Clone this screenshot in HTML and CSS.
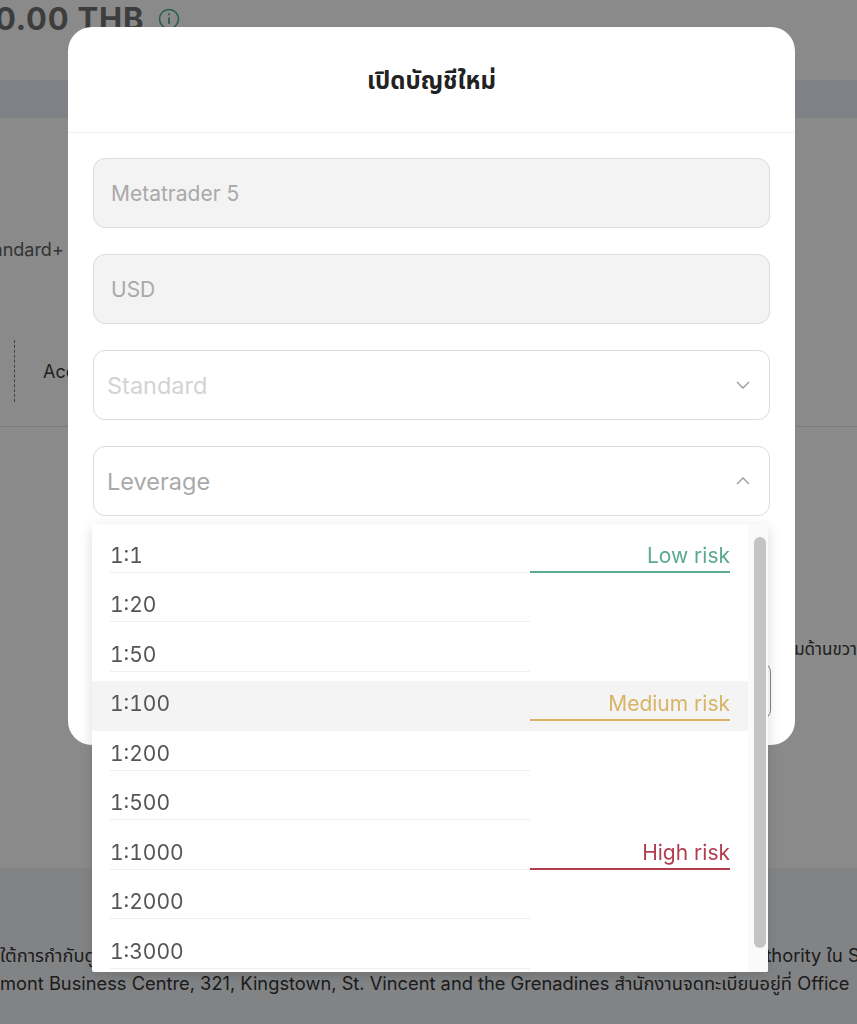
FILE: index.html
```html
<!DOCTYPE html>
<html lang="th">
<head>
<meta charset="utf-8">
<title>เปิดบัญชีใหม่</title>
<link rel="stylesheet" href="styles.css">
</head>
<body>
<div class="page">
  <div class="balance">
    <span class="amount">0.00 THB</span>
    <svg class="info" width="22" height="22" viewBox="0 0 22 22"><circle cx="11" cy="11" r="9.5" fill="none" stroke="currentColor" stroke-width="1.6"/><line x1="11" y1="9.5" x2="11" y2="16" stroke="currentColor" stroke-width="1.8"/><circle cx="11" cy="6.3" r="1.1" fill="currentColor"/></svg>
  </div>
  <div class="band"></div>
  <div class="plan">Standard+</div>
  <div class="acc"><span class="acc-divider"></span><span class="acc-label">Account</span></div>
  <div class="hint">คลิกที่ปุ่มมุมด้านขวา</div>
  <footer class="footer">
    <p class="foot-line"><span>ใต้การกำกับดูแลของ</span><span class="foot-right">Authority ใน St.</span></p>
    <p class="foot-line">mont Business Centre, 321, Kingstown, St. Vincent and the Grenadines สำนักงานจดทะเบียนอยู่ที่ Office</p>
  </footer>
</div>

<div class="backdrop">
  <div class="modal">
    <div class="modal-head"><h2>เปิดบัญชีใหม่</h2></div>
    <div class="modal-body">
      <div class="field disabled">Metatrader 5</div>
      <div class="field disabled">USD</div>
      <div class="field select faint">Standard
        <svg class="chev" width="14" height="8" viewBox="0 0 14 8"><polyline points="1,1 7,7 13,1" fill="none" stroke="currentColor" stroke-width="1.4"/></svg>
      </div>
      <div class="field-wrap">
        <div class="field select">Leverage
          <svg class="chev" width="14" height="8" viewBox="0 0 14 8"><polyline points="1,7 7,1 13,7" fill="none" stroke="currentColor" stroke-width="1.4"/></svg>
        </div>
        <div class="dropdown">
          <ul class="options">
            <li class="opt"><span class="val">1:1</span><span class="risk low">Low risk</span></li>
            <li class="opt"><span class="val">1:20</span><span class="risk"></span></li>
            <li class="opt"><span class="val">1:50</span><span class="risk"></span></li>
            <li class="opt active"><span class="val">1:100</span><span class="risk medium">Medium risk</span></li>
            <li class="opt"><span class="val">1:200</span><span class="risk"></span></li>
            <li class="opt"><span class="val">1:500</span><span class="risk"></span></li>
            <li class="opt"><span class="val">1:1000</span><span class="risk high">High risk</span></li>
            <li class="opt"><span class="val">1:2000</span><span class="risk"></span></li>
            <li class="opt"><span class="val">1:3000</span><span class="risk"></span></li>
          </ul>
          <div class="scrollbar"><div class="thumb"></div></div>
        </div>
      </div>
      <div class="agree">ยอมรับเงื่อนไข</div>
      <button class="submit" type="button">เปิดบัญชี</button>
    </div>
  </div>
</div>
</body>
</html>
```

FILE: styles.css
```css
* { box-sizing: border-box; }
html, body { margin: 0; padding: 0; }
body {
  width: 857px;
  height: 1024px;
  overflow: hidden;
  background: #ffffff;
  font-family: Inter, "Noto Sans", "Noto Sans Thai", "DejaVu Sans", sans-serif;
  color: #333;
}

/* ---------- background page ---------- */
.page { width: 857px; height: 1024px; overflow: hidden; }

.balance {
  height: 80px;
  display: flex;
  align-items: flex-start;
  gap: 14px;
  padding-top: 2px;
  margin-left: -5px;
}
.amount {
  font-size: 31px;
  font-weight: 700;
  line-height: 34px;
  color: #717171;
  letter-spacing: 0.8px;
}
.info { color: #4fae8f; margin-top: 6px; }

.band { height: 38px; background: #e9f1f8; }

.plan {
  margin-top: 120px;
  margin-left: -25px;
  font-size: 18px;
  line-height: 24px;
  color: #5e5e5e;
}

.acc {
  margin-top: 78px;
  height: 62px;
  display: flex;
  align-items: center;
  padding-left: 14px;
}
.acc-divider {
  width: 0;
  height: 62px;
  border-left: 1.5px dashed #7a7a7a;
}
.acc-label {
  margin-left: 28px;
  font-size: 18px;
  color: #3c3c3c;
}
.hint {
  margin-top: 24px;
  border-top: 1px solid #e6e6e6;
  padding-top: 210px;
  text-align: right;
  font-size: 17px;
  line-height: 24px;
  color: #3a3a3a;
  white-space: nowrap;
}

.footer {
  margin-top: 207px;
  height: 160px;
  background: #f1f3f5;
  padding-top: 73px;
  font-size: 18.3px;
  color: #343434;
}
.foot-line {
  margin: 0;
  line-height: 28px;
  white-space: nowrap;
  display: flex;
  justify-content: space-between;
}
.foot-right { margin-right: -14px; }

/* ---------- modal ---------- */
.backdrop {
  position: fixed;
  inset: 0;
  background: rgba(0, 0, 0, 0.46);
}
.modal {
  position: absolute;
  left: 68px;
  top: 27px;
  width: 727px;
  height: 718px;
  background: #fff;
  border-radius: 24px;
}
.modal-head {
  height: 106px;
  border-bottom: 1px solid #f1f1f1;
  display: flex;
  align-items: center;
  justify-content: center;
}
.modal-head h2 {
  margin: 0;
  font-size: 24px;
  font-weight: 700;
  line-height: 30px;
  padding-top: 2px;
  color: #222;
}
.modal-body {
  padding: 25px;
  display: flex;
  flex-direction: column;
  gap: 26px;
}
.field {
  height: 70px;
  border: 1px solid #dcdcdc;
  border-radius: 12px;
  display: flex;
  align-items: center;
  justify-content: space-between;
  padding: 0 19px 0 13px;
  font-size: 23.5px;
  color: #a9a9a9;
  background: #fff;
}
.field.disabled { background: #f3f3f3; padding-left: 17px; font-size: 21px; }
.field.faint { color: #d3d3d3; }
.chev { color: #9c9c9c; }

.field-wrap { position: relative; }

.dropdown {
  position: absolute;
  left: -1px;
  top: calc(100% + 8px);
  width: 676px;
  height: 448px;
  background: #fff;
  display: flex;
  box-shadow: 0 4px 14px rgba(0, 0, 0, 0.14);
  border-radius: 2px;
  z-index: 2;
  overflow: hidden;
}
.options {
  flex: 1;
  margin: 0;
  padding: 8.5px 0 0;
  list-style: none;
}
.opt {
  height: 49.5px;
  padding: 0 18px;
  display: flex;
}
.opt.active { background: #f4f4f4; }
.val, .risk {
  height: 40px;
  padding-top: 7px;
  line-height: 32px;
  font-size: 21px;
}
.val {
  width: 420px;
  color: #555;
  font-variant-numeric: tabular-nums;
  border-bottom: 1px solid #efefef;
}
.opt.active .val { border-bottom-color: transparent; }
.risk {
  flex: 1;
  text-align: right;
}
.risk.low { color: #5aa991; border-bottom: 2px solid #5aa991; }
.risk.medium { color: #d8b464; border-bottom: 2px solid #d8b464; }
.risk.high { color: #b13e50; border-bottom: 2px solid #b13e50; }

.scrollbar {
  width: 20px;
  background: #fafafa;
  padding: 13px 2px 24px 6px;
  display: flex;
}
.thumb {
  flex: 1;
  background: #c4c4c4;
  border-radius: 6px;
}

.agree {
  height: 94px;
  font-size: 16px;
  color: #555;
  display: flex;
  align-items: center;
}
.submit {
  height: 58px;
  border: 1px solid #7d8a8a;
  border-radius: 10px;
  background: #fff;
  font-family: inherit;
  font-size: 18px;
  color: #333;
  margin-right: -1px;
}
```
